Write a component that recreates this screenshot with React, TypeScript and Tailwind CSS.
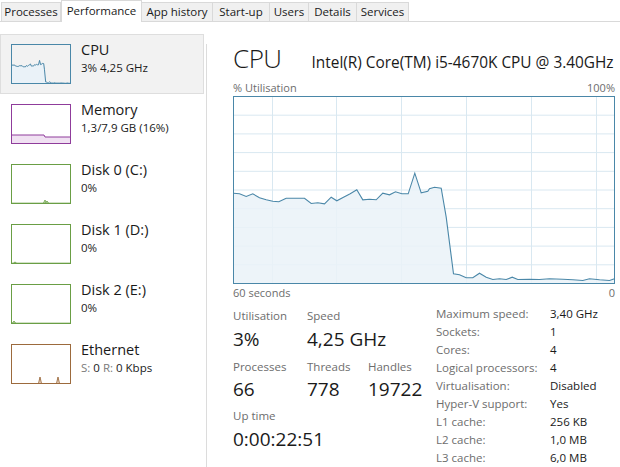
import React from "react";

const pts: [number, number][] = [
  [0, 96.7], [6, 97.3], [12.7, 100], [19.3, 97.3], [26, 101.3], [32.7, 103.3], [39.3, 104.7], [45.3, 105.3],
  [52.7, 101.7], [62.7, 101.7], [71, 101.7], [77.7, 107], [84.3, 106.3], [91, 107.3], [97.7, 100.7], [103.3, 104.3],
  [110, 100.7], [116.7, 97.3], [123.3, 93.3], [129.3, 103.3], [136, 102.7], [142.7, 103.3], [149.3, 96.7], [156, 98.3],
  [162, 95.3], [168.3, 97.3], [174.7, 97.3], [181.3, 76.7], [187.7, 96.3], [194.3, 94.7], [196, 92.3], [201, 90.7],
  [207.7, 91.7], [212.7, 120.7], [220, 177.3], [226, 178.3], [232.7, 181.3], [239.3, 181.3], [246, 176.7], [252.7, 180.7],
  [259.3, 183], [266, 182.3], [272.7, 183], [278.7, 180.7], [284.3, 183], [296, 182.7], [306, 183], [316, 182.3],
  [329.3, 182.7], [339.3, 183.3], [349.3, 184], [356, 182.3], [366, 183.3], [376, 184], [381, 182.3],
];
const line = pts.map((p) => p.join(",")).join(" ");
const area = line + " 381,187 0,187";

const CPU_C = "#4a87a8";

function MainChart() {
  const vx = [39, 103, 168, 233, 298, 363];
  const hy = [1, 2, 3, 4, 5, 6, 7, 8, 9].map((i) => i * 18.7);
  return (
    <svg width="382" height="188" viewBox="-0.5 -0.5 382 188" className="block">
      {vx.map((x) => (
        <line key={"v" + x} x1={x} y1={0} x2={x} y2={187} stroke="#d9e8f1" strokeWidth="1" />
      ))}
      {hy.map((y) => (
        <line key={"h" + y} x1={0} y1={y} x2={381} y2={y} stroke="#d9e8f1" strokeWidth="1" />
      ))}
      <polygon points={area} fill="#eaf2f8" fillOpacity="0.85" />
      <polyline points={line} fill="none" stroke={CPU_C} strokeWidth="1.1" />
      <rect x="0" y="0" width="381" height="187" fill="none" stroke={CPU_C} strokeWidth="1" />
    </svg>
  );
}

function CpuThumb() {
  return (
    <svg width="60" height="40" viewBox="0 0 381 187" preserveAspectRatio="none" className="block">
      <polygon points={area} fill="#eaf2f8" />
      <polyline points={line} fill="none" stroke={CPU_C} strokeWidth="1" vectorEffect="non-scaling-stroke" />
      <rect x="0" y="0" width="381" height="187" fill="none" stroke={CPU_C} strokeWidth="2" vectorEffect="non-scaling-stroke" />
    </svg>
  );
}

function MemThumb() {
  const c = "#8f3c9b";
  return (
    <svg width="60" height="40" viewBox="0 0 60 40" className="block">
      <polygon points="0,31 33,31 34,33 60,33 60,40 0,40" fill="#f0e1f2" />
      <polyline points="0,31 33,31 34,33 60,33" fill="none" stroke={c} strokeWidth="1" />
      <rect x="0.5" y="0.5" width="59" height="39" fill="none" stroke={c} strokeWidth="1" />
    </svg>
  );
}

function DiskThumb({ spikes }: { spikes: [number, number][] }) {
  const c = "#6a9e45";
  return (
    <svg width="60" height="40" viewBox="0 0 60 40" className="block">
      {spikes.map(([x, h], i) => (
        <polyline key={i} points={`${x - 1.5},39 ${x},${39 - h} ${x + 1.5},39`} fill="#cfe3c0" stroke={c} strokeWidth="0.8" />
      ))}
      <line x1="0" y1="39" x2="60" y2="39" stroke={c} strokeWidth="0.6" />
      <rect x="0.5" y="0.5" width="59" height="39" fill="none" stroke={c} strokeWidth="1" />
    </svg>
  );
}

function EthThumb() {
  const c = "#9c6a3d";
  return (
    <svg width="60" height="40" viewBox="0 0 60 40" className="block">
      {[29, 47].map((x) => (
        <polyline key={x} points={`${x - 1.5},39.5 ${x},33 ${x + 1.5},39.5`} fill="#ecd8c6" stroke={c} strokeWidth="0.9" />
      ))}
      <rect x="0.5" y="0.5" width="59" height="39" fill="none" stroke={c} strokeWidth="1" />
    </svg>
  );
}

function SideItem({
  thumb,
  title,
  sub,
  selected,
}: {
  thumb: React.ReactNode;
  title: string;
  sub: React.ReactNode;
  selected?: boolean;
}) {
  return (
    <div
      className={
        "flex h-[60px] items-start pl-[10px] pt-[9px] " +
        (selected ? "bg-[#f2f2f2] border border-[#dedede] pl-[9px] pt-[8px]" : "border border-transparent")
      }
    >
      {thumb}
      <div className="ml-[10px] -mt-[1px] leading-none">
        <div className="text-[14.5px] text-[#1a1a1a]">{title}</div>
        <div className="mt-[4px] text-[11.5px] text-[#1a1a1a]">{sub}</div>
      </div>
    </div>
  );
}

const tabs = ["Processes", "Performance", "App history", "Start-up", "Users", "Details", "Services"];
const tabW = [59, 81, 71, 57, 39, 48, 52];

export default function App() {
  const specs: [string, string][] = [
    ["Maximum speed:", "3,40 GHz"],
    ["Sockets:", "1"],
    ["Cores:", "4"],
    ["Logical processors:", "4"],
    ["Virtualisation:", "Disabled"],
    ["Hyper-V support:", "Yes"],
    ["L1 cache:", "256 KB"],
    ["L2 cache:", "1,0 MB"],
    ["L3 cache:", "6,0 MB"],
  ];
  return (
    <div
      className="w-[620px] h-[467px] overflow-hidden bg-white text-[#1a1a1a]"
      style={{ fontFamily: '"Open Sans", "Noto Sans", sans-serif' }}
    >
      {/* Tabs */}
      <div className="relative flex h-[22px] items-end pl-[2px]">
        <div className="absolute left-0 right-0 bottom-0 h-px bg-[#d9d9d9]" />
        {tabs.map((t, i) =>
          i === 1 ? (
            <div
              key={t}
              className="relative z-10 flex h-[22px] items-start justify-center border-x border-t border-[#d9d9d9] bg-white pt-[1px] text-[11.5px]"
              style={{ width: tabW[i] }}
            >
              {t}
            </div>
          ) : (
            <div
              key={t}
              className="relative flex h-[20px] items-center justify-center border border-[#d9d9d9] bg-[#f0f0f0] text-[11.5px] -ml-px first:ml-0"
              style={{ width: tabW[i] + 1 }}
            >
              {t}
            </div>
          )
        )}
      </div>

      <div className="flex h-[445px]">
        {/* Sidebar */}
        <div className="w-[204px] shrink-0 pt-[12px]">
          <SideItem selected thumb={<CpuThumb />} title="CPU" sub="3%  4,25 GHz" />
          <SideItem thumb={<MemThumb />} title="Memory" sub="1,3/7,9 GB (16%)" />
          <SideItem thumb={<DiskThumb spikes={[[34, 3], [36, 2]]} />} title="Disk 0 (C:)" sub="0%" />
          <SideItem thumb={<DiskThumb spikes={[[4, 1]]} />} title="Disk 1 (D:)" sub="0%" />
          <SideItem thumb={<DiskThumb spikes={[[3, 2]]} />} title="Disk 2 (E:)" sub="0%" />
          <SideItem
            thumb={<EthThumb />}
            title="Ethernet"
            sub={
              <span>
                <span className="text-[#7a7a7a]">S:</span> 0 <span className="text-[#7a7a7a]">R:</span> 0 Kbps
              </span>
            }
          />
        </div>
        <div className="ml-[2px] mt-[22px] w-px shrink-0 bg-[#dcdcdc]" />

        {/* Main */}
        <div className="flex-1 pl-[26px] pr-[5px]">
          <div className="flex items-baseline pt-[23px] leading-none">
            <div className="text-[26px] font-light tracking-[-0.5px]">CPU</div>
            <div className="ml-[30px] text-[15.4px]">Intel(R) Core(TM) i5-4670K CPU @ 3.40GHz</div>
          </div>
          <div className="mt-[11px] flex justify-between text-[11px] leading-none text-[#6d6d6d]">
            <span>% Utilisation</span>
            <span>100%</span>
          </div>
          <div className="mt-[3px]">
            <MainChart />
          </div>
          <div className="mt-[3px] flex justify-between text-[11px] leading-none text-[#6d6d6d]">
            <span>60 seconds</span>
            <span>0</span>
          </div>

          <div className="mt-[12px] flex">
            {/* Left stats */}
            <div className="w-[203px]">
              <div className="flex">
                <div className="w-[74px]">
                  <div className="text-[11.5px] leading-none text-[#6d6d6d]">Utilisation</div>
                  <div className="mt-[8px] text-[19px] leading-none">3%</div>
                </div>
                <div>
                  <div className="text-[11.5px] leading-none text-[#6d6d6d]">Speed</div>
                  <div className="mt-[8px] text-[19px] leading-none">4,25 GHz</div>
                </div>
              </div>
              <div className="mt-[12px] flex">
                <div className="w-[74px]">
                  <div className="text-[11.5px] leading-none text-[#6d6d6d]">Processes</div>
                  <div className="mt-[8px] text-[19px] leading-none">66</div>
                </div>
                <div className="w-[61px]">
                  <div className="text-[11.5px] leading-none text-[#6d6d6d]">Threads</div>
                  <div className="mt-[8px] text-[19px] leading-none">778</div>
                </div>
                <div>
                  <div className="text-[11.5px] leading-none text-[#6d6d6d]">Handles</div>
                  <div className="mt-[8px] text-[19px] leading-none">19722</div>
                </div>
              </div>
              <div className="mt-[11px]">
                <div className="text-[11.5px] leading-none text-[#6d6d6d]">Up time</div>
                <div className="mt-[8px] text-[19px] leading-none">0:00:22:51</div>
              </div>
            </div>
            {/* Right specs */}
            <div className="-mt-[3px] grid grid-cols-[114px_auto] gap-y-[4px] text-[11.5px] leading-[14px]">
              {specs.map(([k, v]) => (
                <React.Fragment key={k}>
                  <div className="text-[#6d6d6d]">{k}</div>
                  <div>{v}</div>
                </React.Fragment>
              ))}
            </div>
          </div>
        </div>
      </div>
    </div>
  );
}
